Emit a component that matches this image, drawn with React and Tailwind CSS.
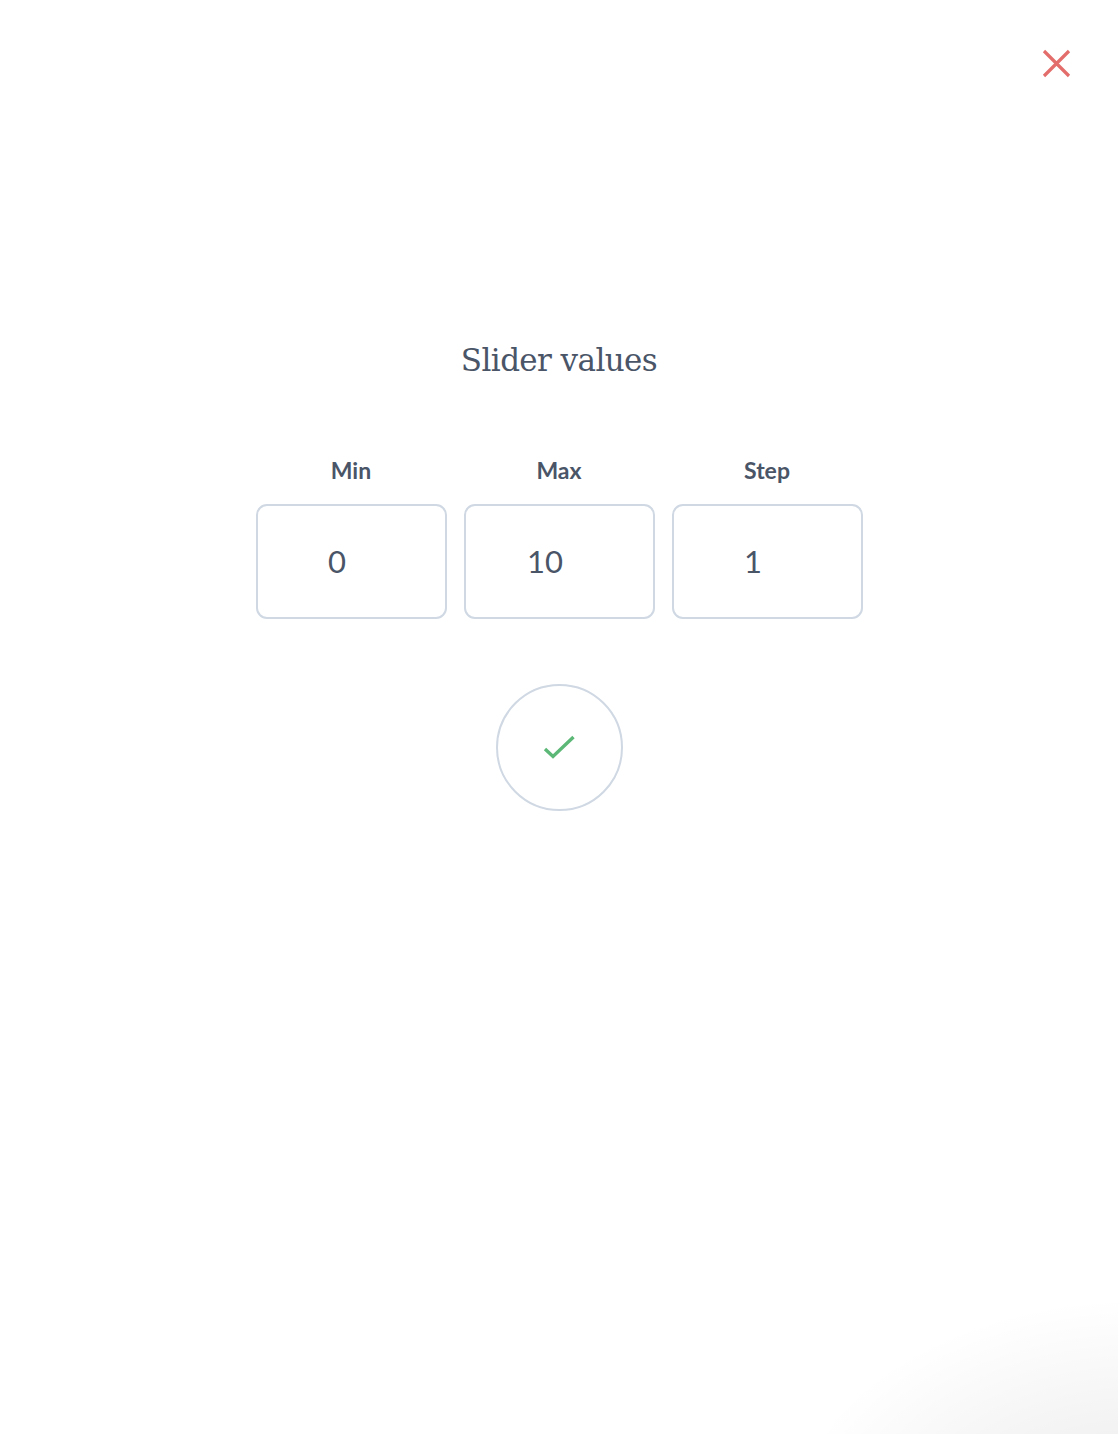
import React from "react";

function Field({ label, value }) {
  return (
    <div className="flex flex-col items-center w-[191px]">
      <div className="text-[23px] font-bold text-[#4a5568] leading-none h-[22px]">{label}</div>
      <div className="mt-[23px] w-[191px] h-[115px] border-2 border-[#cfd8e3] rounded-[11px] flex items-center justify-center pr-[28px]">
        <span className="text-[31px] text-[#4a5568] leading-none">{value}</span>
      </div>
    </div>
  );
}

export default function App() {
  return (
    <div
      className="relative w-[1118px] h-[1434px] bg-white overflow-hidden"
      style={{ fontFamily: "Lato, 'Open Sans', sans-serif" }}
    >
      <button className="absolute left-[1041px] top-[48px] w-[31px] h-[31px]">
        <svg viewBox="0 0 31 31" width="31" height="31">
          <path d="M3 3 L28 28 M28 3 L3 28" stroke="#e36d6a" strokeWidth="3.2" strokeLinecap="butt" fill="none" />
        </svg>
      </button>

      <div className="flex flex-col items-center pt-[345px]">
        <h1
          className="text-[31px] text-[#4a5568] leading-none h-[40px]"
          style={{ fontFamily: "'DejaVu Serif', 'Liberation Serif', serif", letterSpacing: "-0.6px" }}
        >
          Slider values
        </h1>
        <div className="mt-[74px] flex gap-[17px]">
          <Field label="Min" value="0" />
          <Field label="Max" value="10" />
          <Field label="Step" value="1" />
        </div>
        <button className="mt-[65px] w-[127px] h-[127px] rounded-full border-2 border-[#cfd8e3] flex items-center justify-center">
          <svg viewBox="0 0 40 40" width="40" height="40">
            <path d="M6 21 L14 28.5 L34.5 9" stroke="#5cb877" strokeWidth="3.4" fill="none" />
          </svg>
        </button>
      </div>

      <div
        className="absolute right-[-200px] bottom-[-200px] w-[600px] h-[380px] pointer-events-none"
        style={{ background: "radial-gradient(ellipse at 70% 75%, rgba(0,0,0,0.09), rgba(0,0,0,0) 60%)" }}
      />
    </div>
  );
}
